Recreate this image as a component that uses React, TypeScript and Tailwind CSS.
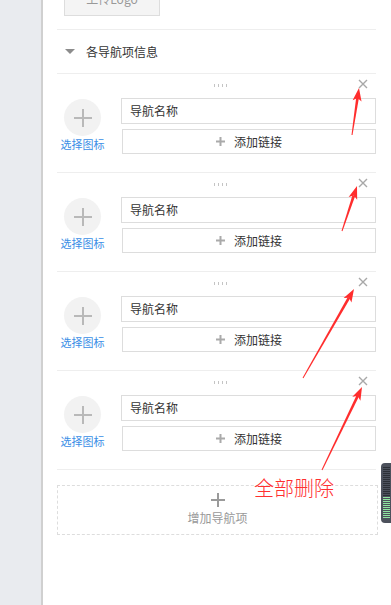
import React from 'react';

const items = [0, 1, 2, 3];

// tail -> tip of the red annotation arrows
const arrows = [
  { x1: 352, y1: 135, x2: 359, y2: 88 },
  { x1: 342, y1: 231, x2: 357, y2: 186 },
  { x1: 303, y1: 378, x2: 354, y2: 289 },
  { x1: 322, y1: 470, x2: 362, y2: 387 },
];

function Arrow({ x1, y1, x2, y2 }: { x1: number; y1: number; x2: number; y2: number }) {
  const dx = x2 - x1;
  const dy = y2 - y1;
  const len = Math.sqrt(dx * dx + dy * dy);
  const ux = dx / len;
  const uy = dy / len;
  const px = -uy;
  const py = ux;
  const head = 13;
  const bx = x2 - ux * head;
  const by = y2 - uy * head;
  const nx = x2 - ux * (head - 3);
  const ny = y2 - uy * (head - 3);
  const shaft = [
    `${x1 + px * 0.5},${y1 + py * 0.5}`,
    `${nx + px * 1.4},${ny + py * 1.4}`,
    `${nx - px * 1.4},${ny - py * 1.4}`,
    `${x1 - px * 0.5},${y1 - py * 0.5}`,
  ].join(' ');
  const tri = [
    `${x2},${y2}`,
    `${bx + px * 4.5},${by + py * 4.5}`,
    `${nx},${ny}`,
    `${bx - px * 4.5},${by - py * 4.5}`,
  ].join(' ');
  return (
    <g fill="#ff2d2d">
      <polygon points={shaft} />
      <polygon points={tri} />
    </g>
  );
}

function NavItem() {
  return (
    <div className="border-b border-[#eeeeee]">
      <div className="flex h-[24px] pl-[16px] pr-[8px]">
        <div className="flex-1" />
        <div className="mt-[10px] flex gap-[3px]">
          <span className="h-[3px] w-px bg-[#c4c4c4]" />
          <span className="h-[3px] w-px bg-[#c4c4c4]" />
          <span className="h-[3px] w-px bg-[#c4c4c4]" />
          <span className="h-[3px] w-px bg-[#c4c4c4]" />
        </div>
        <div className="flex flex-1 justify-end">
          <svg className="mt-[5px]" width="10" height="10" viewBox="0 0 10 10">
            <path d="M1 1L9 9M9 1L1 9" stroke="#a8a8a8" strokeWidth="1.4" />
          </svg>
        </div>
      </div>
      <div className="flex pb-[18px]">
        <div className="mr-[13px] flex w-[51px] flex-col items-center">
          <div className="mt-px flex h-[37px] w-[37px] items-center justify-center rounded-full bg-[#f2f2f2]">
            <svg width="20" height="20" viewBox="0 0 20 20">
              <path d="M10 1V19M1 10H19" stroke="#b9b9b9" strokeWidth="2" />
            </svg>
          </div>
          <span className="whitespace-nowrap text-[11px] leading-[16px] text-[#3a8ee6]">选择图标</span>
        </div>
        <div className="flex flex-1 flex-col gap-[5px]">
          <div className="flex h-[26px] items-center border border-[#dddddd] pl-[8px] text-[12px] text-[#333333]">
            导航名称
          </div>
          <div className="ml-px flex h-[25px] items-center justify-center gap-[9px] border border-[#dddddd] text-[12px] text-[#333333]">
            <svg width="9" height="9" viewBox="0 0 9 9">
              <path d="M4.5 0V9M0 4.5H9" stroke="#aaaaaa" strokeWidth="2" />
            </svg>
            <span>添加链接</span>
          </div>
        </div>
      </div>
    </div>
  );
}

export default function App() {
  return (
    <div className="relative flex h-[605px] w-[391px] overflow-hidden bg-white font-['Noto_Sans_CJK_SC','Liberation_Sans',sans-serif]">
      <div className="w-[43px] shrink-0 border-r-2 border-[#d0d0d0] bg-[#e9ebef]" />
      <div className="flex-1 pl-[14px] pr-[15px]">
        <div className="h-[16px] overflow-hidden">
          <div className="-mt-[18px] ml-[7px] flex h-[34px] w-[96px] items-center justify-center border border-[#dddddd] bg-[#f4f4f4] text-[12px] text-[#999999]">
            上传Logo
          </div>
        </div>
        <div className="mt-[13px] flex h-[45px] items-center border-y border-[#eeeeee] pl-[8px]">
          <div className="h-0 w-0 border-x-[5px] border-t-[5px] border-x-transparent border-t-[#8c8c8c]" />
          <span className="ml-[11px] text-[12px] text-[#333333]">各导航项信息</span>
        </div>
        {items.map((i) => (
          <NavItem key={i} />
        ))}
        <div className="-mr-[2px] mt-[15px] flex h-[50px] flex-col items-center border border-dashed border-[#dddddd] pt-[7px]">
          <svg width="14" height="14" viewBox="0 0 14 14">
            <path d="M7 0V14M0 7H14" stroke="#9a9a9a" strokeWidth="2" />
          </svg>
          <span className="mt-[3px] text-[12px] leading-[16px] text-[#999999]">增加导航项</span>
        </div>
      </div>

      <svg className="pointer-events-none absolute left-0 top-0" width="391" height="605">
        {arrows.map((a, i) => (
          <Arrow key={i} {...a} />
        ))}
      </svg>
      <span className="absolute left-[254px] top-[475px] text-[20px] font-light leading-[26px] text-[#ff3030]">全部删除</span>

      <div className="absolute right-0 top-[463px] flex h-[60px] w-[10px] flex-col gap-px rounded-l-[4px] bg-[#4c515c] py-[4px] pl-[2px]">
        {Array.from({ length: 26 }).map((_, i) => (
          <span
            key={i}
            className={i < 15 ? 'h-px w-[7px] bg-[#2c3037]' : 'h-px w-[7px] bg-[#8fe3a0]'}
          />
        ))}
      </div>
    </div>
  );
}
